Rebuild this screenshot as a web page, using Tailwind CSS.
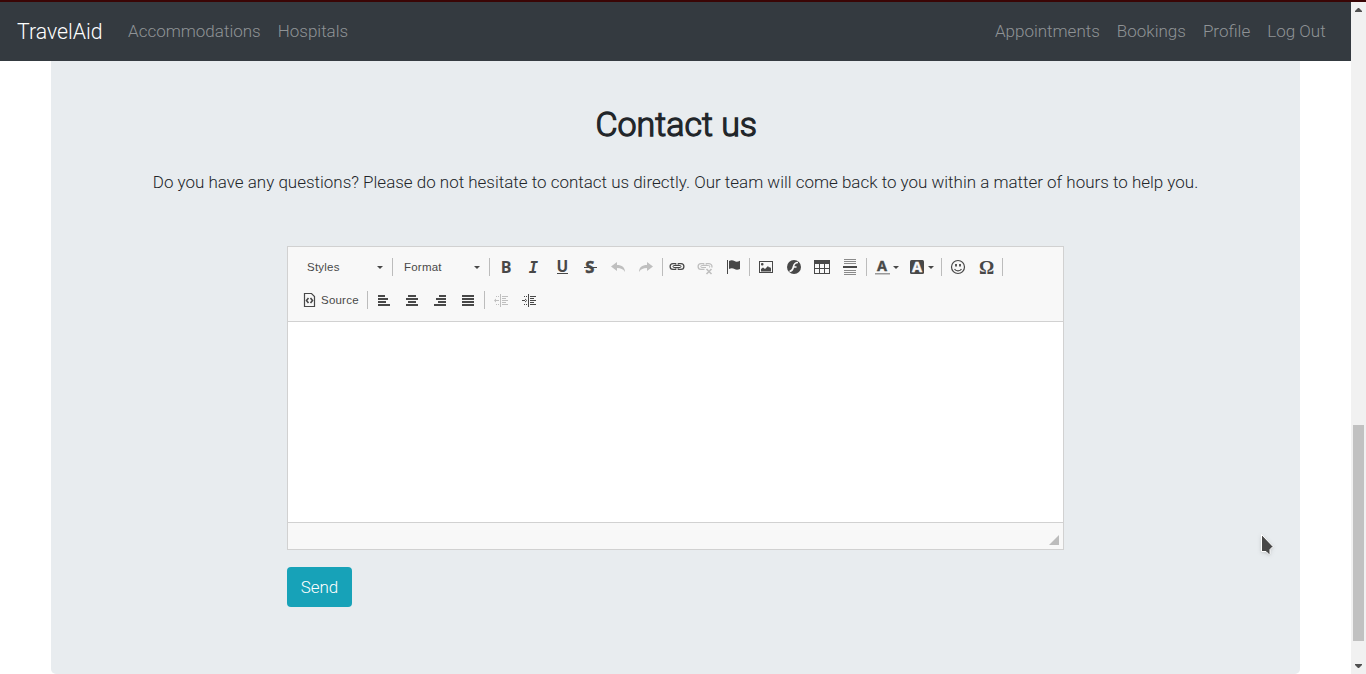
<!DOCTYPE html>
<html lang="en">
<head>
<meta charset="utf-8">
<title>TravelAid</title>
<script src="https://cdn.jsdelivr.net/npm/@tailwindcss/browser@4"></script>
</head>
<body class="relative flex h-[674px] w-[1366px] overflow-hidden bg-white font-['Roboto',sans-serif] text-[17px] font-light text-[#212529]">
<div class="flex w-[1351px] flex-col">
  <nav class="flex h-[61px] shrink-0 items-center border-t-2 border-[#3a0505] bg-[#343a40] pr-[25.4px] pl-[17px] text-[#8f9396]">
    <a class="w-[111px] text-[21.25px] whitespace-nowrap text-white">TravelAid</a>
    <div class="flex grow gap-[17px]"><a>Accommodations</a><a>Hospitals</a></div>
    <div class="flex gap-[17px]"><a>Appointments</a><a>Bookings</a><a>Profile</a><a>Log Out</a></div>
  </nav>
  <main class="mx-[51px] flex h-[613px] flex-col items-center rounded-b-[5px] bg-[#e8ecef]">
    <h2 class="mt-[43px] h-[41px] pl-[1.5px] text-[34px] leading-[41px] [-webkit-text-stroke:1.3px_#212529]">Contact us</h2>
    <p class="mt-[24px] text-[16.98px] leading-[26px] whitespace-nowrap">Do you have any questions? Please do not hesitate to contact us directly. Our team will come back to you within a matter of hours to help you.</p>
    <div class="mt-[51px] w-[777px]">
      <section class="h-[304px] border border-[#d1d1d1] bg-white font-['Liberation_Sans',Arial,sans-serif] text-[11.5px] tracking-[0.22px] font-normal text-[#484848]">
        <div class="h-[75px] border-b border-[#d1d1d1] bg-[#f8f8f8] pt-[11px]">
          <div class="flex h-[18px] items-center">
            <div class="ml-[19px] flex w-[85px] items-center"><span class="w-[70px] pt-[2px]">Styles</span><svg width="6" height="3"><path d="M0 0h6L3 3z" fill="#484848"/></svg></div>
            <i class="h-[18px] w-px bg-[#bcbcbc]"></i>
            <div class="ml-[11px] flex w-[85px] items-center"><span class="w-[70px] pt-[2px]">Format</span><svg width="6" height="3"><path d="M0 0h6L3 3z" fill="#484848"/></svg></div>
            <i class="h-[18px] w-px bg-[#bcbcbc]"></i>
            <div class="ml-[2px] flex tracking-normal">
              <svg class="mx-[6px] overflow-visible" width="16" height="16"><text x="2.800" y="13.600" font-family="Open Sans" font-weight="700" font-size="16" fill="#484848">B</text></svg>
              <svg class="mx-[6px] overflow-visible" width="16" height="16"><text x="2.800" y="13.500" font-family="DejaVu Sans Mono" font-weight="700" font-style="italic" font-size="15.500" fill="#484848">I</text></svg>
              <svg class="mx-[6px] overflow-visible" width="16" height="16"><text x="2.500" y="12.500" font-family="Open Sans" font-weight="700" font-size="15.500" fill="#484848">U</text><path d="M3 14h11v1H3z" fill="#484848"/></svg>
              <svg class="mx-[6px] overflow-visible" width="16" height="16"><text x="3.200" y="13.600" font-family="Open Sans" font-weight="700" font-size="16.500" fill="#484848" stroke="#484848" stroke-width=".5">S</text><path d="M2 8h13v1H2z" fill="#484848"/></svg>
              <svg class="mx-[6px]" width="16" height="16"><path d="M1 7.500 7 3v3c5 0 8 2.500 8 7-2-3-4-4-8-4v3z" fill="#bfbfbf"/></svg>
              <svg class="mx-[6px]" width="16" height="16"><path d="M15 7.500 9 3v3c-5 0-8 2.500-8 7 2-3 4-4 8-4v3z" fill="#bfbfbf"/></svg>
            </div>
            <i class="ml-[2px] h-[18px] w-px bg-[#bcbcbc]"></i>
            <div class="flex">
              <svg class="mx-[6px]" width="16" height="16" fill="none" stroke="#484848" stroke-width="1.300"><path d="M7.300 5.500 6.500 4.600H4a2.900 2.900 0 0 0 0 5.800h2.500l.8-.9M8.700 5.500l.8-.9H12a2.900 2.900 0 0 1 0 5.800H9.500l-.8-.9"/><rect x="4" y="6.500" width="8" height="2" rx="1" stroke-width="1"/></svg>
              <svg class="mx-[6px]" width="16" height="16" fill="none" stroke="#bfbfbf" stroke-width="1.300"><path d="M7.300 5.500 6.500 4.600H4a2.900 2.900 0 0 0 0 5.800h3.500M8.700 5.500l.8-.9H12a2.900 2.900 0 0 1 2.700 4"/><path d="M9 8.500H4.800a1 1 0 0 1 0-2H11.500a1 1 0 0 1 .5 2" stroke-width="1"/><path d="m9.500 10 5 5m0-5-5 5" stroke-width="1.600"/></svg>
              <svg class="mx-[6px]" width="16" height="16" fill="#484848"><path d="M2 1h1v14H2zM4 2c2-1.200 4-1 5.500 0s3 .8 5.500-.2V10c-2 .9-4 1-5.500 0S6 8.800 4 10z"/></svg>
            </div>
            <i class="ml-[2px] h-[18px] w-px bg-[#bcbcbc]"></i>
            <div class="ml-[2px] flex">
              <svg class="mx-[6px]" width="16" height="16" fill="#484848"><path fill-rule="evenodd" d="M1 2h14v12H1zM2 3v10h12V3z"/><path d="M3 12.500V10l2-1.500 2 1.500 3-3 1 1.500 1-.5 1 1.500v3z"/><rect x="3" y="4" width="2.500" height="2.500" rx="1"/></svg>
              <svg class="mx-[6px]" width="16" height="16"><circle cx="8" cy="8" r="7" fill="#484848"/><path d="M12 3.500c-3 0-4 1.500-4.500 4S6 12 3.500 12.500M7 8h3.500" fill="none" stroke="#f8f8f8" stroke-width="1.700"/></svg>
              <svg class="mx-[6px]" width="16" height="16" fill="#484848"><path fill-rule="evenodd" d="M0 1h16v14H0zM1 5v4h4V5zM6 5v4h4V5zM11 5v4h4V5zM1 10v4h4v-4zM6 10v4h4v-4zM11 10v4h4v-4z"/></svg>
              <svg class="mx-[6px]" width="16" height="16" fill="#8a8a8a"><path d="M2 0h12v1H2zM2 2h12v1H2zM2 4h12v1H2zM2 11h12v1H2zM2 13h12v1H2zM2 15h12v1H2z"/><path d="M1 7h14v2H1z" fill="#484848"/></svg>
            </div>
            <i class="ml-[2px] h-[18px] w-px bg-[#bcbcbc]"></i>
            <div class="ml-[1px] flex tracking-normal">
              <div class="flex w-[35px] items-center pl-[6px]"><svg class="overflow-visible" width="16" height="16"><text x="3" y="12" font-family="Open Sans" font-weight="700" font-size="14.500" fill="#484848" stroke="#484848" stroke-width=".4">A</text><path d="M1 14h15v1.500H1z" fill="#999"/></svg><svg class="ml-[3px]" width="6" height="3"><path d="M0 0h6L3 3z" fill="#484848"/></svg></div>
              <div class="flex w-[35px] items-center pl-[6px]"><svg class="overflow-visible" width="16" height="16"><rect x="1" y="1" width="14" height="14" rx="1.500" fill="#484848"/><text x="3" y="13" font-family="Open Sans" font-weight="700" font-size="14.500" fill="#f8f8f8" stroke="#f8f8f8" stroke-width=".4">A</text></svg><svg class="ml-[3px]" width="6" height="3"><path d="M0 0h6L3 3z" fill="#484848"/></svg></div>
            </div>
            <i class="ml-[3px] h-[18px] w-px bg-[#bcbcbc]"></i>
            <div class="ml-[2px] flex tracking-normal">
              <svg class="mx-[6px]" width="16" height="16" fill="none" stroke="#484848" stroke-width="1.200"><circle cx="8" cy="8" r="6.500"/><path d="M4.500 10c1.500 2.500 5.500 2.500 7 0"/><path d="M6 5v2.500M10 5v2.500" stroke-width="1.800"/></svg>
              <svg class="mx-[6px] overflow-visible" width="16" height="16"><text x="1" y="15" font-family="Liberation Serif" font-weight="700" font-size="19" fill="#484848">Ω</text></svg>
            </div>
            <i class="ml-[2px] h-[18px] w-px bg-[#bcbcbc]"></i>
          </div>
          <div class="mt-[15px] flex h-[18px] items-center">
            <div class="ml-[14px] flex w-[65px] items-center"><svg width="16" height="16" fill="none" stroke="#484848" stroke-width="1.200"><path d="M2.500 1.500h7l3 3v10h-10z"/><path d="M6.500 6 4.500 8.500l2 2.500M8.500 6l2 2.500-2 2.500" stroke-width="1.600"/></svg><span class="ml-[3px] pt-[2px]">Source</span></div>
            <i class="h-[18px] w-px bg-[#bcbcbc]"></i>
            <div class="ml-[2px] flex">
              <svg class="mx-[6px]" width="16" height="16" fill="#484848"><path d="M2 3h7v2H2zM2 6h10v2H2zM2 9h8v2H2zM2 12h12v2H2z"/></svg>
              <svg class="mx-[6px]" width="16" height="16" fill="#484848"><path d="M4 3h8v2H4zM2 6h12v2H2zM4 9h8v2H4zM2 12h12v2H2z"/></svg>
              <svg class="mx-[6px]" width="16" height="16" fill="#484848"><path d="M7 3h7v2H7zM4 6h10v2H4zM6 9h8v2H6zM2 12h12v2H2z"/></svg>
              <svg class="mx-[6px]" width="16" height="16" fill="#484848"><path d="M2 3h12v2H2zM2 6h12v2H2zM2 9h12v2H2zM2 12h12v2H2z"/></svg>
            </div>
            <i class="ml-[2px] h-[18px] w-px bg-[#bcbcbc]"></i>
            <div class="ml-[2px] flex">
              <svg class="mx-[6px]" width="16" height="16" fill="#bfbfbf"><path d="M7 2h1v13H7zM9 4h6v1H9zM9 6h4v1H9zM9 8h6v1H9zM9 10h4v1H9zM9 12h6v1H9zM2 8h4v1H2zM1 8.500l2-2v4zM3 4h1v1H3zM5 4h1v1H5zM3 12h1v1H3zM5 12h1v1H5z"/></svg>
              <svg class="mx-[6px]" width="16" height="16" fill="#484848"><path d="M7 2h1v13H7zM9 4h6v1H9zM9 6h4v1H9zM9 8h6v1H9zM9 10h4v1H9zM9 12h6v1H9zM1 8h4v1H1zM6 8.500l-2-2v4zM3 4h1v1H3zM5 4h1v1H5zM3 12h1v1H3zM5 12h1v1H5z"/></svg>
            </div>
          </div>
        </div>
        <div class="h-[200px]"></div>
        <div class="flex h-[27px] items-end justify-end border-t border-[#d1d1d1] bg-[#f8f8f8] pr-[4px] pb-[4px]"><svg width="10" height="10"><path d="M10 0v10H0z" fill="#bcbcbc"/></svg></div>
      </section>
      <button class="mt-[17px] block h-[40px] w-[65px] rounded-[4px] bg-[#17a2b8] pt-[2px] text-[17px] font-light text-white">Send</button>
    </div>
  </main>
</div>
<aside class="flex w-[15px] flex-col items-center bg-[#f1f1f1]">
  <i class="h-[2px] w-full bg-[#3a0505]"></i>
  <svg class="mt-[6px]" width="7" height="4"><path d="M3 0h1l3 3v1H0V3z" fill="#505050"/></svg>
  <div class="mt-[413px] h-[216px] w-[11px] bg-[#c1c1c1]"></div>
  <svg class="mt-[23px]" width="7" height="4"><path d="M0 0h7v1L4 4H3L0 1z" fill="#505050"/></svg>
</aside>
<svg class="absolute top-[533px] left-[1259px] drop-shadow" width="18" height="24"><path d="M2.500 1.500v17H7l3 3 1-1v-4l3-3z" fill="#484848" stroke="#fff"/></svg>
</body>
</html>
